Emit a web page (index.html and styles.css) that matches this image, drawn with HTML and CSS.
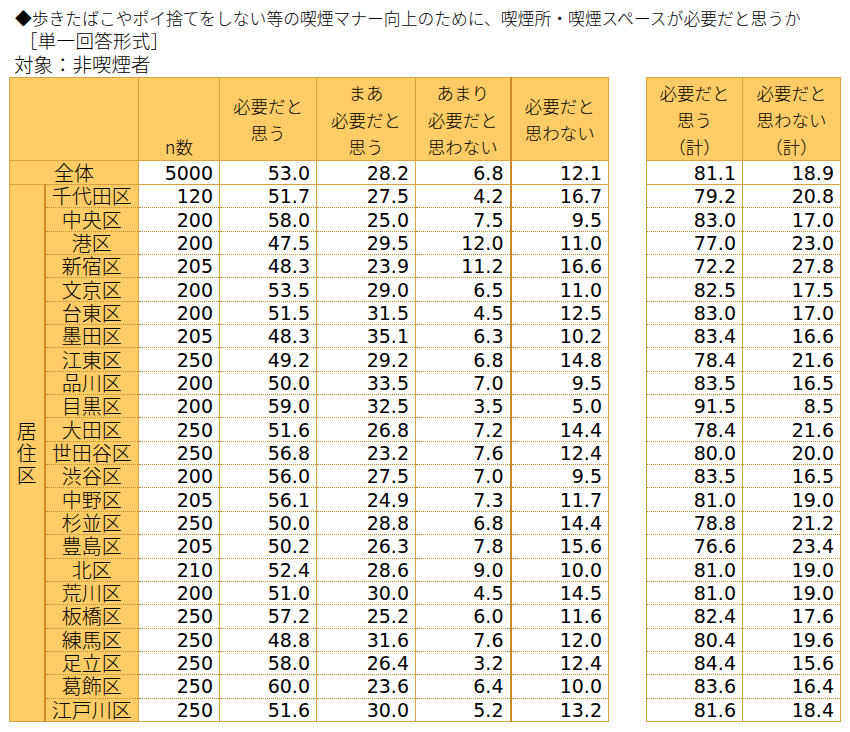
FILE: index.html
```html
<!DOCTYPE html>
<html lang="ja">
<head>
<meta charset="utf-8">
<link rel="stylesheet" href="styles.css">
</head>
<body>
<div class="page">
  <div class="title">
    <div class="t1">◆歩きたばこやポイ捨てをしない等の喫煙マナー向上のために、喫煙所・喫煙スペースが必要だと思うか</div>
    <div class="t2">［単一回答形式］</div>
    <div class="t3">対象：非喫煙者</div>
  </div>
  <div class="tables">
    <table class="tbl main">
      <colgroup>
        <col class="c-area"><col class="c-ward"><col class="c-n"><col class="c-a"><col class="c-b"><col class="c-c"><col class="c-d">
      </colgroup>
      <thead>
        <tr class="head">
          <th colspan="2"></th>
          <th class="nh">n数</th>
          <th>必要だと<br>思う</th>
          <th>まあ<br>必要だと<br>思う</th>
          <th>あまり<br>必要だと<br>思わない</th>
          <th class="thick">必要だと<br>思わない</th>
        </tr>
      </thead>
      <tbody>
        <tr class="total"><th colspan="2" class="tl">全体</th><td>5000</td><td>53.0</td><td>28.2</td><td>6.8</td><td class="thick">12.1</td></tr>
        <tr class="w"><th rowspan="23" class="area">居<br>住<br>区</th><th class="ward">千代田区</th><td>120</td><td>51.7</td><td>27.5</td><td>4.2</td><td class="thick">16.7</td></tr>
        <tr class="w"><th class="ward">中央区</th><td>200</td><td>58.0</td><td>25.0</td><td>7.5</td><td class="thick">9.5</td></tr>
        <tr class="w"><th class="ward">港区</th><td>200</td><td>47.5</td><td>29.5</td><td>12.0</td><td class="thick">11.0</td></tr>
        <tr class="w"><th class="ward">新宿区</th><td>205</td><td>48.3</td><td>23.9</td><td>11.2</td><td class="thick">16.6</td></tr>
        <tr class="w"><th class="ward">文京区</th><td>200</td><td>53.5</td><td>29.0</td><td>6.5</td><td class="thick">11.0</td></tr>
        <tr class="w"><th class="ward">台東区</th><td>200</td><td>51.5</td><td>31.5</td><td>4.5</td><td class="thick">12.5</td></tr>
        <tr class="w"><th class="ward">墨田区</th><td>205</td><td>48.3</td><td>35.1</td><td>6.3</td><td class="thick">10.2</td></tr>
        <tr class="w"><th class="ward">江東区</th><td>250</td><td>49.2</td><td>29.2</td><td>6.8</td><td class="thick">14.8</td></tr>
        <tr class="w"><th class="ward">品川区</th><td>200</td><td>50.0</td><td>33.5</td><td>7.0</td><td class="thick">9.5</td></tr>
        <tr class="w"><th class="ward">目黒区</th><td>200</td><td>59.0</td><td>32.5</td><td>3.5</td><td class="thick">5.0</td></tr>
        <tr class="w"><th class="ward">大田区</th><td>250</td><td>51.6</td><td>26.8</td><td>7.2</td><td class="thick">14.4</td></tr>
        <tr class="w"><th class="ward">世田谷区</th><td>250</td><td>56.8</td><td>23.2</td><td>7.6</td><td class="thick">12.4</td></tr>
        <tr class="w"><th class="ward">渋谷区</th><td>200</td><td>56.0</td><td>27.5</td><td>7.0</td><td class="thick">9.5</td></tr>
        <tr class="w"><th class="ward">中野区</th><td>205</td><td>56.1</td><td>24.9</td><td>7.3</td><td class="thick">11.7</td></tr>
        <tr class="w"><th class="ward">杉並区</th><td>250</td><td>50.0</td><td>28.8</td><td>6.8</td><td class="thick">14.4</td></tr>
        <tr class="w"><th class="ward">豊島区</th><td>205</td><td>50.2</td><td>26.3</td><td>7.8</td><td class="thick">15.6</td></tr>
        <tr class="w"><th class="ward">北区</th><td>210</td><td>52.4</td><td>28.6</td><td>9.0</td><td class="thick">10.0</td></tr>
        <tr class="w"><th class="ward">荒川区</th><td>200</td><td>51.0</td><td>30.0</td><td>4.5</td><td class="thick">14.5</td></tr>
        <tr class="w"><th class="ward">板橋区</th><td>250</td><td>57.2</td><td>25.2</td><td>6.0</td><td class="thick">11.6</td></tr>
        <tr class="w"><th class="ward">練馬区</th><td>250</td><td>48.8</td><td>31.6</td><td>7.6</td><td class="thick">12.0</td></tr>
        <tr class="w"><th class="ward">足立区</th><td>250</td><td>58.0</td><td>26.4</td><td>3.2</td><td class="thick">12.4</td></tr>
        <tr class="w"><th class="ward">葛飾区</th><td>250</td><td>60.0</td><td>23.6</td><td>6.4</td><td class="thick">10.0</td></tr>
        <tr class="w"><th class="ward">江戸川区</th><td>250</td><td>51.6</td><td>30.0</td><td>5.2</td><td class="thick">13.2</td></tr>
      </tbody>
    </table>
    <table class="tbl sum">
      <colgroup><col class="c-s1"><col class="c-s2"></colgroup>
      <thead>
        <tr class="head">
          <th>必要だと<br>思う<br>（計）</th>
          <th>必要だと<br>思わない<br>（計）</th>
        </tr>
      </thead>
      <tbody>
        <tr class="total"><td>81.1</td><td>18.9</td></tr>
        <tr class="w"><td>79.2</td><td>20.8</td></tr>
        <tr class="w"><td>83.0</td><td>17.0</td></tr>
        <tr class="w"><td>77.0</td><td>23.0</td></tr>
        <tr class="w"><td>72.2</td><td>27.8</td></tr>
        <tr class="w"><td>82.5</td><td>17.5</td></tr>
        <tr class="w"><td>83.0</td><td>17.0</td></tr>
        <tr class="w"><td>83.4</td><td>16.6</td></tr>
        <tr class="w"><td>78.4</td><td>21.6</td></tr>
        <tr class="w"><td>83.5</td><td>16.5</td></tr>
        <tr class="w"><td>91.5</td><td>8.5</td></tr>
        <tr class="w"><td>78.4</td><td>21.6</td></tr>
        <tr class="w"><td>80.0</td><td>20.0</td></tr>
        <tr class="w"><td>83.5</td><td>16.5</td></tr>
        <tr class="w"><td>81.0</td><td>19.0</td></tr>
        <tr class="w"><td>78.8</td><td>21.2</td></tr>
        <tr class="w"><td>76.6</td><td>23.4</td></tr>
        <tr class="w"><td>81.0</td><td>19.0</td></tr>
        <tr class="w"><td>81.0</td><td>19.0</td></tr>
        <tr class="w"><td>82.4</td><td>17.6</td></tr>
        <tr class="w"><td>80.4</td><td>19.6</td></tr>
        <tr class="w"><td>84.4</td><td>15.6</td></tr>
        <tr class="w"><td>83.6</td><td>16.4</td></tr>
        <tr class="w"><td>81.6</td><td>18.4</td></tr>
      </tbody>
    </table>
  </div>
</div>
</body>
</html>
```

FILE: styles.css
```css
html, body {
  margin: 0;
  padding: 0;
  background: #ffffff;
  color: #000000;
}

.page {
  padding: 7px 0 0 9px;
  font-family: "Noto Sans CJK JP", "Noto Sans", sans-serif;
  font-weight: 300;
}

.title {
  padding-left: 6px;
}

.t1 {
  font-size: 16.8px;
  line-height: 22px;
  white-space: nowrap;
}

.t2 {
  font-size: 18.5px;
  line-height: 22px;
  padding-left: 4px;
  letter-spacing: 0.3px;
}

.t3 {
  font-size: 19.5px;
  line-height: 26px;
  margin-left: -1px;
}

.tables {
  display: flex;
  align-items: flex-start;
  gap: 37px;
}

.tbl {
  border-collapse: collapse;
  table-layout: fixed;
}

.tbl th,
.tbl td {
  border: 1px solid #dca23e;
  padding: 0;
}

.c-area { width: 35px; }
.c-ward { width: 94px; }
.c-n { width: 81px; }
.c-a { width: 97px; }
.c-b { width: 99px; }
.c-c { width: 95px; }
.c-d { width: 98px; }
.c-s1 { width: 96px; }
.c-s2 { width: 98px; }

.main { width: 599px; }
.sum { width: 194px; }

.tbl th {
  background: #ffcc66;
  font-weight: 300;
}

.head th {
  height: 82px;
  font-size: 17.5px;
  line-height: 27px;
  text-align: center;
  vertical-align: middle;
}

.head th.nh {
  vertical-align: bottom;
}

.total th,
.total td {
  height: 23px;
}

.w th,
.w td {
  height: 22.35px;
}

.tbl td {
  background: #ffffff;
  font-family: "DejaVu Sans", Verdana, sans-serif;
  font-weight: normal;
  font-size: 19px;
  line-height: 20px;
  text-align: right;
  padding-right: 6px;
  vertical-align: middle;
}

.tl {
  font-size: 20px;
  line-height: 20px;
  text-align: center;
  padding-right: 8px;
}

.ward {
  font-size: 20px;
  line-height: 20px;
  text-align: center;
  border-left: 2px solid #cc8a22 !important;
}

.area {
  font-size: 20px;
  line-height: 22px;
  text-align: center;
  vertical-align: middle;
}

.w td,
.w th.ward {
  border-top: 1px dotted #c08a30;
  border-bottom: 1px dotted #c08a30;
}

.w:last-child td,
.w:last-child th.ward {
  border-bottom: 1px solid #dca23e;
}

.tbl th.thick,
.tbl td.thick {
  border-left: 2px solid #cc8a22;
}
```
